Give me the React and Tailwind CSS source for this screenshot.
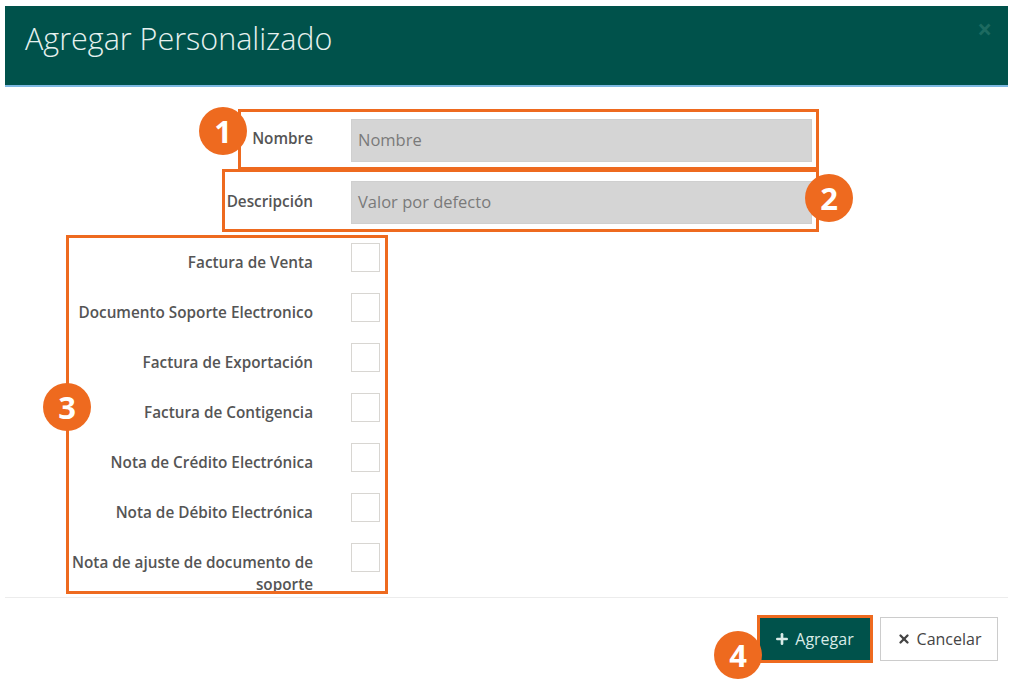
import { Plus, X } from "lucide-react";

const docTypes = [
  "Factura de Venta",
  "Documento Soporte Electronico",
  "Factura de Exportación",
  "Factura de Contigencia",
  "Nota de Crédito Electrónica",
  "Nota de Débito Electrónica",
  "Nota de ajuste de documento de soporte",
];

function Badge({ n, className }) {
  return (
    <div
      className={`absolute w-[48px] h-[48px] rounded-full bg-[#ee6a1f] text-white flex items-center justify-center text-[31px] font-bold leading-none ${className}`}
    >
      {n}
    </div>
  );
}

function Mark({ className }) {
  return <div className={`absolute border-[3px] border-[#ee6a1f] pointer-events-none ${className}`} />;
}

export default function App() {
  return (
    <div className="relative w-[1014px] h-[687px] bg-white font-['Open_Sans',sans-serif] overflow-hidden">
      <div className="ml-[5px] pt-[6px] w-[1003px]">
        {/* Header */}
        <div className="h-[81px] bg-[#00524b] border-b-2 border-[#7db8e2] flex items-start justify-between pl-[20px] pr-[16px]">
          <h1 className="mt-[10px] text-[30.5px] font-light text-[#e6f1ef]">Agregar Personalizado</h1>
          <span className="mt-[10px] text-[26px] font-bold leading-none text-[#1d6a60]">×</span>
        </div>

        {/* Body */}
        <div className="pt-[32px]">
          <div className="flex items-start">
            <label className="w-[308px] text-right pt-[8px] text-[15.3px] font-semibold text-[#555]">Nombre</label>
            <div className="ml-[38px] w-[461px] h-[43px] bg-[#d5d5d5] border border-[#cfcfcf] flex items-center px-[6px] text-[16.5px] text-[#7a7a7a]">
              Nombre
            </div>
          </div>
          <div className="flex items-start mt-[19px]">
            <label className="w-[308px] text-right pt-[9px] text-[15.3px] font-semibold text-[#555]">Descripción</label>
            <div className="ml-[38px] w-[461px] h-[43px] bg-[#d5d5d5] border border-[#cfcfcf] flex items-center px-[6px] text-[16.5px] text-[#7a7a7a]">
              Valor por defecto
            </div>
          </div>

          <div className="mt-[19px] flex flex-col gap-[20px]">
            {docTypes.map((t) => (
              <div key={t} className="flex items-start">
                <label className="w-[308px] pl-[60px] text-right pt-[8px] text-[15.3px] leading-[22px] font-semibold text-[#555]">
                  {t}
                </label>
                <div className="ml-[38px] w-[29px] h-[29px] border border-[#d8d6d2] bg-white" />
              </div>
            ))}
          </div>
        </div>

        {/* Footer */}
        <div className="mt-[2px] border-t border-[#ececec] flex justify-end gap-[10px] pt-[19px] pr-[10px]">
          <button className="h-[44px] w-[112px] bg-[#00524b] text-[#d8ebe7] text-[16px] flex items-center justify-center gap-[5px]">
            <Plus size={16} strokeWidth={4} />
            Agregar
          </button>
          <button className="h-[44px] w-[118px] bg-white border border-[#cccccc] text-[#444] text-[16px] flex items-center justify-center gap-[6px]">
            <X size={14} strokeWidth={4} />
            Cancelar
          </button>
        </div>
      </div>

      {/* Annotations */}
      <Mark className="left-[238px] top-[109px] w-[581px] h-[61px]" />
      <Mark className="left-[222px] top-[169px] w-[597px] h-[63px]" />
      <Mark className="left-[66px] top-[235px] w-[322px] h-[359px]" />
      <Mark className="left-[757px] top-[615px] w-[116px] h-[48px]" />
      <Badge n="1" className="left-[199px] top-[107px]" />
      <Badge n="2" className="left-[805px] top-[174px]" />
      <Badge n="3" className="left-[43px] top-[383px]" />
      <Badge n="4" className="left-[714px] top-[631px]" />
    </div>
  );
}
